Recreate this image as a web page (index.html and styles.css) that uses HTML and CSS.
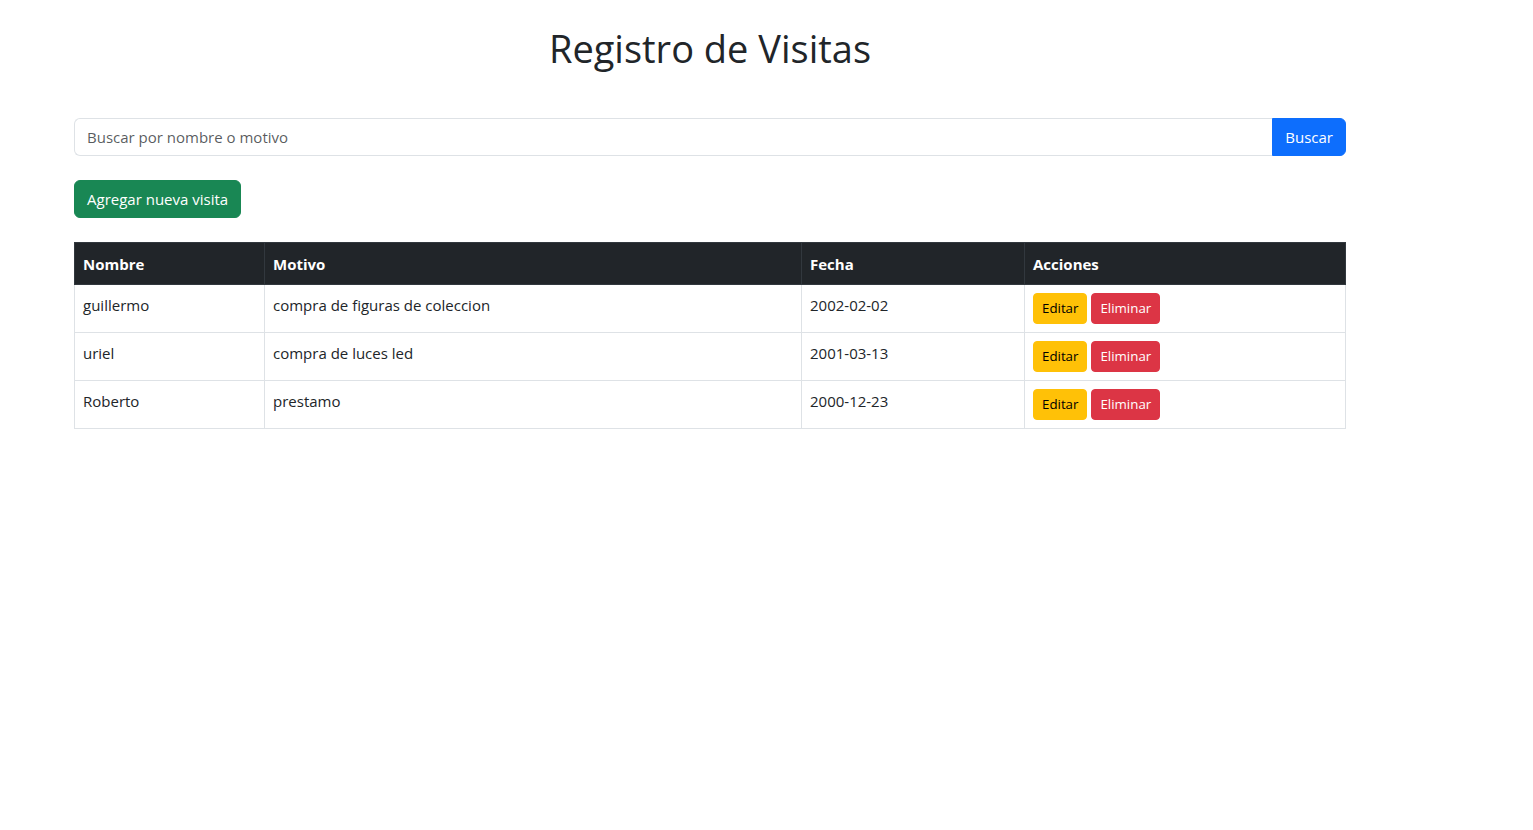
FILE: index.html
```html
<!DOCTYPE html>
<html lang="es">
<head>
<meta charset="utf-8">
<title>Registro de Visitas</title>
<link rel="stylesheet" href="styles.css">
</head>
<body>
<div class="container">
  <h1 class="title">Registro de Visitas</h1>
  <form class="search" onsubmit="return false">
    <input class="search-input" type="text" placeholder="Buscar por nombre o motivo">
    <button class="btn btn-primary search-btn" type="submit">Buscar</button>
  </form>
  <button class="btn btn-success add-btn" type="button">Agregar nueva visita</button>
  <table class="table">
    <colgroup>
      <col class="c-nombre"><col class="c-motivo"><col class="c-fecha"><col class="c-acciones">
    </colgroup>
    <thead>
      <tr><th>Nombre</th><th>Motivo</th><th>Fecha</th><th>Acciones</th></tr>
    </thead>
    <tbody>
      <tr>
        <td>guillermo</td><td>compra de figuras de coleccion</td><td>2002-02-02</td>
        <td><button class="btn-sm btn-warning">Editar</button><button class="btn-sm btn-danger">Eliminar</button></td>
      </tr>
      <tr>
        <td>uriel</td><td>compra de luces led</td><td>2001-03-13</td>
        <td><button class="btn-sm btn-warning">Editar</button><button class="btn-sm btn-danger">Eliminar</button></td>
      </tr>
      <tr>
        <td>Roberto</td><td>prestamo</td><td>2000-12-23</td>
        <td><button class="btn-sm btn-warning">Editar</button><button class="btn-sm btn-danger">Eliminar</button></td>
      </tr>
    </tbody>
  </table>
</div>
</body>
</html>
```
FILE: styles.css
```css
* { box-sizing: border-box; }
html, body { margin: 0; padding: 0; background: #fff; }
body {
  font-family: "Open Sans", "Noto Sans", sans-serif;
  font-size: 15px;
  line-height: 24px;
  color: #212529;
}
.container {
  width: 1272px;
  margin-left: 74px;
  padding-top: 24px;
}
.title {
  margin: 0 0 46px;
  font-size: 38px;
  line-height: 48px;
  font-weight: 400;
  text-align: center;
}
.search {
  display: flex;
  margin: 0 0 24px;
}
.search-input {
  flex: 1;
  height: 38px;
  border: 1px solid #dee2e6;
  border-right: 0;
  border-radius: 6px 0 0 6px;
  padding: 6px 12px;
  font: inherit;
  color: #212529;
  outline: none;
}
.search-input::placeholder { color: rgba(33,37,41,.75); }
.btn {
  font: inherit;
  height: 38px;
  padding: 6px 12px;
  border: 1px solid transparent;
  border-radius: 6px;
  color: #fff;
  cursor: pointer;
}
.btn-primary { background: #0d6efd; border-color: #0d6efd; }
.search-btn { border-radius: 0 6px 6px 0; }
.btn-success { background: #198754; border-color: #198754; }
.add-btn { display: block; margin: 0 0 24px; }
.table {
  width: 1271px;
  border-collapse: collapse;
  table-layout: fixed;
}
.c-nombre { width: 190px; }
.c-motivo { width: 537px; }
.c-fecha { width: 223px; }
.c-acciones { width: 321px; }
.table th, .table td {
  border: 1px solid #dee2e6;
  padding: 8px 8px;
  text-align: left;
  vertical-align: top;
}
.table th {
  background: #212529;
  color: #fff;
  font-weight: 700;
  border-color: #32383e;
  height: 41px;
  vertical-align: middle;
  padding-top: 9px;
}
.table td { height: 48px; }
.btn-sm {
  font: inherit;
  font-size: 13.3px;
  line-height: 21px;
  height: 31px;
  padding: 4px 8px;
  border: 1px solid transparent;
  border-radius: 4px;
  margin-right: 4px;
  cursor: pointer;
}
.btn-warning { background: #ffc107; border-color: #ffc107; color: #000; }
.btn-danger { background: #dc3545; border-color: #dc3545; color: #fff; }
```
